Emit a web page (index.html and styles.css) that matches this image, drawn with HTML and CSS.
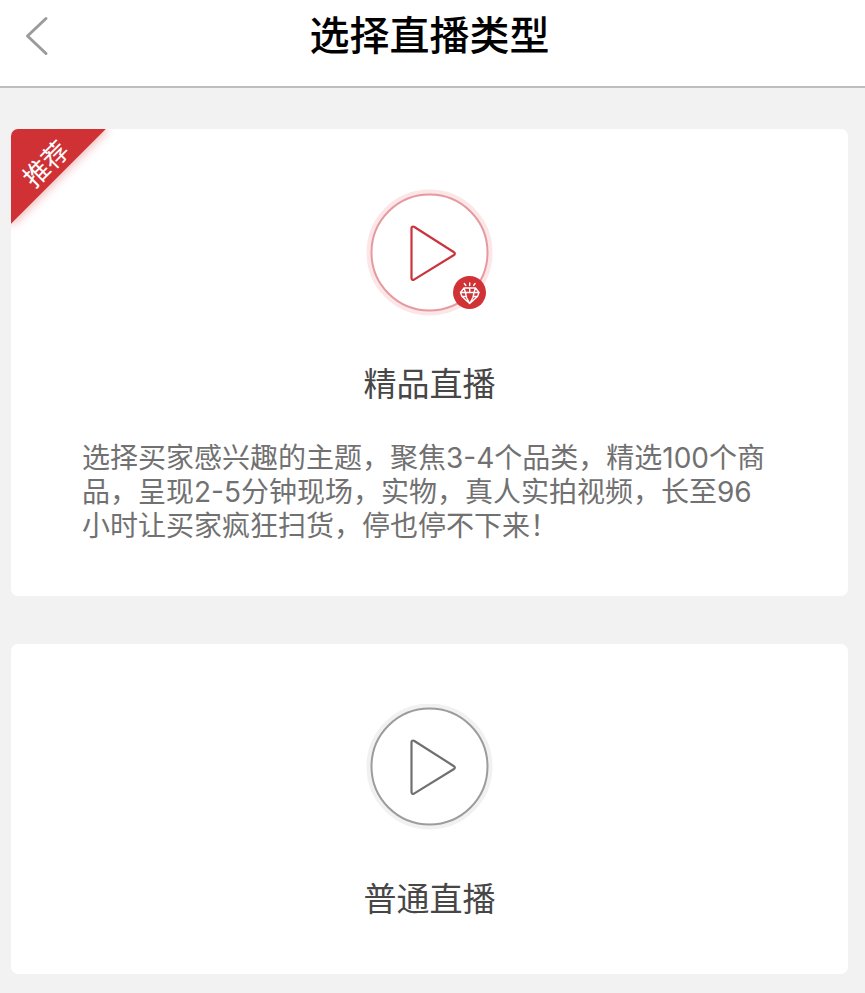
FILE: index.html
```html
<!DOCTYPE html>
<html lang="zh-CN">
<head>
<meta charset="utf-8">
<meta name="viewport" content="width=device-width, initial-scale=1">
<title>选择直播类型</title>
<link rel="stylesheet" href="styles.css">
</head>
<body>
<header class="topbar">
  <button class="back" type="button" aria-label="返回">
    <svg width="24" height="40" viewBox="0 0 24 40" fill="none" stroke="#9b9b9b" stroke-width="3" stroke-linecap="round" stroke-linejoin="round"><path d="M21 2.500 2.500 20 21 37.500"/></svg>
  </button>
  <h1 class="title">选择直播类型</h1>
</header>
<main class="types">
  <a class="card" href="#premium">
    <span class="ribbon"><span class="ribbon-text">推荐</span></span>
    <svg class="icon" width="127" height="127" viewBox="0 0 127 127" fill="none">
      <circle cx="63.500" cy="63.500" r="60.500" stroke="#fce6e7" stroke-width="5"/>
      <circle cx="63.500" cy="63.500" r="58" stroke="#e59a9f" stroke-width="2"/>
      <path d="M45.500 39.200v50a1.600 1.600 0 0 0 2.500 1.400L88 66a1.600 1.600 0 0 0 0-2.800L48 37.800a1.600 1.600 0 0 0-2.500 1.400z" stroke="#cb343d" stroke-width="2.200" stroke-linejoin="round"/>
      <circle cx="103.500" cy="103.500" r="16.500" fill="#d03236"/>
      <g stroke="#fff" stroke-width="1.400" stroke-linecap="round" stroke-linejoin="round">
        <path d="M98 99h11.500l3.500 4.500-1.500 4-7.800 7-7.700-7-1.500-4zM94.500 103.500H113M98 99l1.500 4.500 1 5 3.200 6 3.300-6 1-5 1.500-4.500M103.700 99v4.500M96 107.500h4.500M107 107.500h4.500M103.700 96.500v-2.500M99.800 96.500l-1.500-2M107.600 96.500l1.500-2"/>
      </g>
    </svg>
    <h2 class="name">精品直播</h2>
    <p class="desc">选择买家感兴趣的主题，聚焦3-4个品类，精选100个商品，呈现2-5分钟现场，实物，真人实拍视频，长至96小时让买家疯狂扫货，停也停不下来！</p>
  </a>
  <a class="card" href="#normal">
    <svg class="icon" width="127" height="127" viewBox="0 0 127 127" fill="none">
      <circle cx="63.500" cy="62.500" r="60.500" stroke="#f1f1f1" stroke-width="5"/>
      <circle cx="63.500" cy="62.500" r="58" stroke="#9c9c9c" stroke-width="2"/>
      <path d="M45.500 38.200v50a1.600 1.600 0 0 0 2.500 1.400L88 65a1.600 1.600 0 0 0 0-2.800L48 36.800a1.600 1.600 0 0 0-2.500 1.400z" stroke="#707070" stroke-width="2.200" stroke-linejoin="round"/>
    </svg>
    <h2 class="name">普通直播</h2>
  </a>
</main>
</body>
</html>
```
FILE: styles.css
```css
* {
  box-sizing: border-box;
}

body {
  margin: 0;
  min-height: 100vh;
  background: #f2f2f2;
  font-family: Inter, "Noto Sans CJK SC", sans-serif;
}

.topbar {
  display: grid;
  grid-template-columns: 48px 1fr 48px;
  align-items: center;
  height: 88px;
  padding: 0 17px 14px 11px;
  background: #fff;
  border-bottom: 2px solid #bebebe;
}

.back {
  display: flex;
  padding: 0 0 0 14px;
  border: 0;
  background: none;
  cursor: pointer;
}

.title {
  margin: 0;
  color: #000;
  font-size: 40px;
  font-weight: 500;
  line-height: 56px;
  text-align: center;
}

.types {
  display: flex;
  flex-direction: column;
  gap: 48px;
  padding: 41px 17px 19px 11px;
}

.card {
  position: relative;
  display: flex;
  flex-direction: column;
  align-items: center;
  padding: 60px 71px 53px;
  overflow: hidden;
  border-radius: 7px;
  background: #fff;
  color: #474747;
  text-decoration: none;
}

.icon {
  flex: none;
}

.name {
  margin: 46px 0 0;
  font-size: 33px;
  font-weight: 400;
  line-height: 44px;
}

.desc {
  margin: 35px 0 0;
  color: #717171;
  font-size: 28px;
  line-height: 34px;
}

.ribbon {
  position: absolute;
  top: -67px;
  left: -67px;
  display: flex;
  align-items: flex-end;
  justify-content: center;
  width: 134px;
  height: 134px;
  background: #cf3135;
  box-shadow: 0 3px 8px rgba(207, 49, 53, 0.3);
  transform: rotate(-45deg);
}

.ribbon-text {
  color: #fff;
  font-size: 26px;
  line-height: 34px;
}
```
